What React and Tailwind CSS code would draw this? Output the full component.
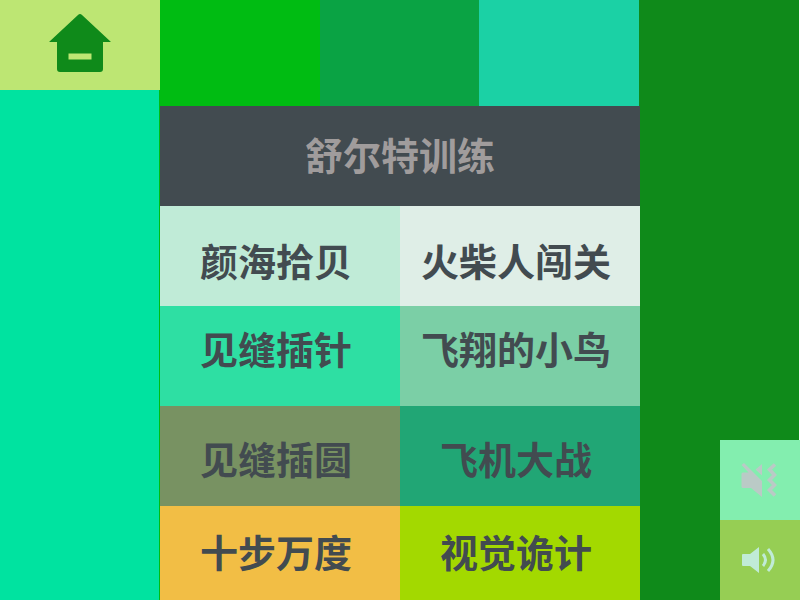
const rows = [
  {
    pad: "pt-2",
    items: [
      { label: "颜海拾贝", tile: "bg-[#c0ebd7]" },
      { label: "火柴人闯关", tile: "bg-[#dfeee7]" },
    ],
  },
  {
    pad: "pb-4",
    items: [
      { label: "见缝插针", tile: "bg-[#2edfa3]" },
      { label: "飞翔的小鸟", tile: "bg-[#7bcfa6]" },
    ],
  },
  {
    pad: "pt-1",
    items: [
      { label: "见缝插圆", tile: "bg-[#789262]" },
      { label: "飞机大战", tile: "bg-[#21a675]" },
    ],
  },
  {
    pad: "pb-1",
    items: [
      { label: "十步万度", tile: "bg-[#f2be45]" },
      { label: "视觉诡计", tile: "bg-[#a3d900]" },
    ],
  },
];

function HomeIcon() {
  return (
    <svg width="62" height="58" viewBox="0 0 62 58" aria-hidden="true">
      <path
        fillRule="evenodd"
        fill="#0f8a1a"
        d="M29 1Q31 -1 33 1L62 28H54V55Q54 58 51 58H11Q8 58 8 55V28H0ZM19.5 39.5V45.5H42.5V39.5Z"
      />
    </svg>
  );
}

function VibrateOffIcon() {
  return (
    <svg width="36" height="34" viewBox="0 0 36 34" aria-hidden="true">
      <path
        fill="#bacac6"
        d="M0.5 2L3 0L21 18V34L10 25H2Q0.5 25 0.5 23.5V11Q0.5 9.5 2 9.5H7.5ZM21 1V12.5L14.5 6.5Z"
      />
      <path
        d="M34 1.5L28.5 6.5L33.5 12L28.5 17L33.5 22L28.5 27L34 32.5"
        fill="none"
        stroke="#bacac6"
        strokeWidth="3.6"
      />
    </svg>
  );
}

function SoundIcon() {
  return (
    <svg width="34" height="26" viewBox="0 0 34 26" aria-hidden="true">
      <path fill="#c0ebd7" d="M1 7H8L17 0V26L8 19H1Q0 19 0 18V8Q0 7 1 7Z" />
      <path d="M21 7Q26 13 21 19M26 2Q36 13 26 24" fill="none" stroke="#c0ebd7" strokeWidth="3" />
    </svg>
  );
}

export default function App() {
  return (
    <div className="flex h-screen overflow-hidden bg-white font-['Noto_Sans_CJK_SC',sans-serif] text-[38px] leading-10 font-bold text-[#424b50]">
      <aside className="flex w-1/5 flex-col">
        <button type="button" aria-label="主页" className="flex h-[90px] items-center justify-center bg-[#bde673] pb-1">
          <HomeIcon />
        </button>
        <div className="flex-1 border-r border-[#00bc12] bg-[#00e3a0]" />
      </aside>

      <main className="flex w-3/5 flex-col">
        <div className="flex h-[106px] border-r border-[#0f8a1a]">
          <div className="flex-1 bg-[#00bc12]" />
          <div className="flex-1 bg-[#0aa344]" />
          <div className="flex-1 bg-[#1bd1a5]" />
        </div>
        <button type="button" className="h-[100px] bg-[#424b50] pb-1 text-[#a09c9c]">
          舒尔特训练
        </button>
        {rows.map((row, i) => (
          <div key={i} className="grid h-[100px] grid-cols-2 last:h-auto last:flex-1">
            {row.items.map((item) => (
              <button
                key={item.label}
                type="button"
                className={`flex items-center justify-center pr-2 ${row.pad} ${item.tile}`}
              >
                {item.label}
              </button>
            ))}
          </div>
        ))}
      </main>

      <aside className="flex w-1/5 flex-col items-end bg-[#0f8a1a]">
        <div className="w-full flex-1 border-r border-white" />
        <button type="button" aria-label="震动" className="flex h-20 w-20 items-center justify-center bg-[#83eeaf] pr-0.5">
          <VibrateOffIcon />
        </button>
        <button type="button" aria-label="声音" className="flex h-20 w-20 items-center justify-center bg-[#96ce54] pr-0.5">
          <SoundIcon />
        </button>
      </aside>
    </div>
  );
}
